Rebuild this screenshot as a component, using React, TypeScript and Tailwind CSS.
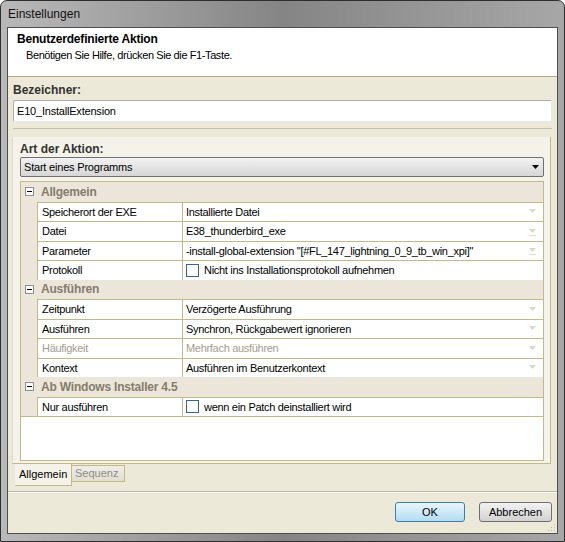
import React from "react";

const font = { fontFamily: '"Liberation Sans", Arial, sans-serif' };

type Prop = {
  label: string;
  value: string;
  kind?: "drop" | "ellipsis" | "check";
  disabled?: boolean;
};

type Category = { title: string; props: Prop[] };

const categories: Category[] = [
  {
    title: "Allgemein",
    props: [
      { label: "Speicherort der EXE", value: "Installierte Datei", kind: "drop" },
      { label: "Datei", value: "E38_thunderbird_exe", kind: "ellipsis" },
      { label: "Parameter", value: '-install-global-extension "[#FL_147_lightning_0_9_tb_win_xpi]"', kind: "ellipsis" },
      { label: "Protokoll", value: "Nicht ins Installationsprotokoll aufnehmen", kind: "check" },
    ],
  },
  {
    title: "Ausführen",
    props: [
      { label: "Zeitpunkt", value: "Verzögerte Ausführung", kind: "drop" },
      { label: "Ausführen", value: "Synchron, Rückgabewert ignorieren", kind: "drop" },
      { label: "Häufigkeit", value: "Mehrfach ausführen", kind: "drop", disabled: true },
      { label: "Kontext", value: "Ausführen im Benutzerkontext", kind: "drop" },
    ],
  },
  {
    title: "Ab Windows Installer 4.5",
    props: [{ label: "Nur ausführen", value: "wenn ein Patch deinstalliert wird", kind: "check" }],
  },
];

function GridArrow({ underline }: { underline?: boolean }) {
  return (
    <svg width="9" height="9" viewBox="0 0 9 9" className="mr-[6px] shrink-0">
      <path d="M1 2h7L4.5 6z" fill="#dcd8c6" />
      {underline && <rect x="1" y="8" width="7" height="1" fill="#e2dece" />}
    </svg>
  );
}

function CategoryRow({ title }: { title: string }) {
  return (
    <div className="flex h-[19.5px] items-center bg-[#ece6da]">
      <div className="ml-[4px] flex h-[9px] w-[9px] items-center justify-center border border-[#8f8f8f] bg-white">
        <div className="h-px w-[5px] bg-black" />
      </div>
      <span className="ml-[7px] text-[12px] font-bold tracking-[-0.2px] text-[#857d6c]">{title}</span>
    </div>
  );
}

function PropRow({ p }: { p: Prop }) {
  const color = p.disabled ? "text-[#a69c8c]" : "text-black";
  return (
    <div className="flex h-[19.5px]">
      <div className="w-[16px] shrink-0 bg-[#ece6da]" />
      <div className="flex flex-1 border-l border-t border-[#c2b88a] bg-white tracking-[-0.3px]">
        <div className={`flex w-[145px] shrink-0 items-center border-r border-[#c2b88a] pl-[4px] ${color}`}>
          {p.label}
        </div>
        <div className={`flex min-w-0 flex-1 items-center pl-[3px] ${color}`}>
          {p.kind === "check" && (
            <div className="mr-[5px] h-[13px] w-[13px] shrink-0 border border-[#2f6790] bg-white" />
          )}
          <span className="flex-1 truncate whitespace-nowrap">{p.value}</span>
          {p.kind === "drop" && <GridArrow />}
          {p.kind === "ellipsis" && <GridArrow underline />}
        </div>
      </div>
    </div>
  );
}

export default function App() {
  return (
    <div
      style={font}
      className="flex h-[542px] w-[565px] flex-col rounded-t-[7px] border border-[#2e2e2e] bg-gradient-to-r from-[#b9b9b9] via-[#858585] to-[#a7a7a7] text-[11px] text-black"
    >
      {/* title bar */}
      <div className="flex h-[26px] items-center pl-[7px] text-[12px] text-[#111]">Einstellungen</div>

      {/* client area */}
      <div className="mx-[6px] mb-[7px] flex flex-1 flex-col border border-[#4e4e4e] bg-[#ece9d8]">
        {/* header */}
        <div className="h-[49px] border-b border-[#b2a981] bg-white">
          <div className="pl-[9px] pt-[4px] text-[12px] font-bold leading-[14px] tracking-[-0.2px]">
            Benutzerdefinierte Aktion
          </div>
          <div className="mt-[2px] pl-[18px] leading-[14px] tracking-[-0.4px]">
            Benötigen Sie Hilfe, drücken Sie die F1-Taste.
          </div>
        </div>

        {/* Bezeichner */}
        <div className="pl-[5px] pt-[6px] text-[12px] font-bold leading-[14px] text-[#333]">Bezeichner:</div>
        <div className="ml-[5px] mt-[3px] flex h-[22px] w-[539px] items-center rounded-[2px] border border-[#abadb3] border-r-[#e3e9ef] border-b-[#e3e9ef] bg-white pl-[3px] tracking-[-0.2px]">
          E10_InstallExtension
        </div>
        <div className="ml-[5px] mt-[6px] h-px w-[539px] bg-[#c2c0b6]" />

        {/* tab panel */}
        <div className="ml-[4px] mt-[8px] flex h-[327px] w-[539px] flex-col border-b border-l border-r border-b-[#c2b88a] border-l-[#dedacb] border-r-[#c2b88a] bg-[#f4f2e9] pl-[7px]">
          <div className="pt-[5px] text-[12px] font-bold leading-[14px] text-[#333]">Art der Aktion:</div>
          <div className="mt-[1px] flex h-[20px] w-[524px] items-center rounded-[2px] border border-[#707070] bg-gradient-to-b from-[#f2f2f2] to-[#d6d6d6] pl-[3px] tracking-[-0.2px]">
            <span className="flex-1">Start eines Programms</span>
            <svg width="7" height="4" viewBox="0 0 7 4" className="mr-[4px]">
              <path d="M0 0h7L3.5 4z" fill="#000" />
            </svg>
          </div>

          {/* property grid */}
          <div className="mt-[4px] flex h-[280px] w-[524px] flex-col border border-[#c2b88a] bg-white">
            {categories.map((c) => (
              <React.Fragment key={c.title}>
                <CategoryRow title={c.title} />
                {c.props.map((p) => (
                  <PropRow key={p.label} p={p} />
                ))}
              </React.Fragment>
            ))}
            <div className="border-t border-[#c2b88a]" />
          </div>
        </div>

        {/* tabs */}
        <div className="ml-[7px] flex h-[22px] items-start">
          <div className="flex h-[22px] w-[57px] items-center border-b border-r border-[#c2b88a] bg-[#f4f2e9] pl-[4px]">
            Allgemein
          </div>
          <div className="mt-[1px] flex h-[17px] w-[53px] items-center border-b border-r border-t border-[#c2b88a] bg-gradient-to-b from-[#f0eee5] to-[#e2ded0] pl-[3px] text-[#8c8c8c]">
            Sequenz
          </div>
        </div>

        <div className="mt-[5px] h-px bg-[#b9b7ae]" />
        <div className="h-px bg-[#fbfaf6]" />

        {/* buttons */}
        <div className="relative flex flex-1 items-start justify-end gap-[14px] pr-[5px] pt-[9px]">
          <button className="flex h-[20px] w-[70px] items-center justify-center rounded-[3px] border border-[#3c7fb1] bg-gradient-to-b from-[#eaf6fd] to-[#b3dcf3] text-[11px]">
            OK
          </button>
          <button className="flex h-[20px] w-[73px] items-center justify-center rounded-[3px] border border-[#707070] bg-gradient-to-b from-[#f2f2f2] to-[#d2d2d2] text-[11px]">
            Abbrechen
          </button>
          <svg width="8" height="8" viewBox="0 0 8 8" className="absolute bottom-[1px] right-[1px]">
            <rect x="6" y="0" width="1" height="1" fill="#b8b4a4" />
            <rect x="3" y="3" width="1" height="1" fill="#b8b4a4" />
            <rect x="6" y="3" width="1" height="1" fill="#b8b4a4" />
            <rect x="0" y="6" width="1" height="1" fill="#b8b4a4" />
            <rect x="3" y="6" width="1" height="1" fill="#b8b4a4" />
            <rect x="6" y="6" width="1" height="1" fill="#b8b4a4" />
          </svg>
        </div>
      </div>
    </div>
  );
}
